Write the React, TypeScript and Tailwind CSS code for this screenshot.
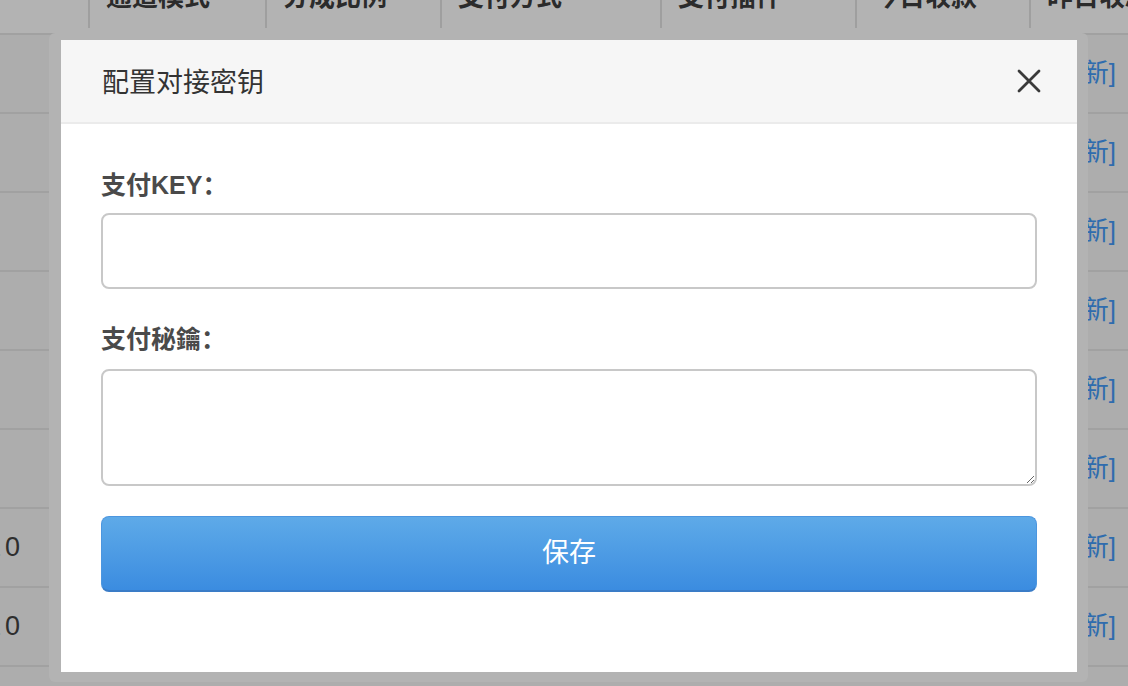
import React from 'react';

const columns = [
  { title: '', width: 'w-[88px]' },
  { title: '通道模式', width: 'w-[177px]' },
  { title: '分成比例', width: 'w-[175px]' },
  { title: '支付方式', width: 'w-[220px]' },
  { title: '支付插件', width: 'w-[195px]' },
  { title: '今日收款', width: 'w-[174px]' },
  { title: '昨日收款', width: 'flex-1' },
];

const rows = [false, false, false, false, false, false, true, true, false];

const CloseIcon = () => (
  <svg width="26" height="26" viewBox="0 0 26 26" fill="none">
    <path d="M3 3 L23 23 M23 3 L3 23" stroke="#3a3a3a" strokeWidth="2.8" strokeLinecap="round" />
  </svg>
);

export default function App() {
  return (
    <div
      className="relative w-[1128px] h-[686px] overflow-hidden bg-[#b3b3b3]"
      style={{ fontFamily: '"Liberation Sans", "Noto Sans CJK SC", sans-serif' }}
    >
      {/* table behind the dialog */}
      <div className="flex flex-col">
        <div className="flex h-[33px]">
          {columns.map((c, i) => (
            <div
              key={i}
              className={`${c.width} h-[28px] ${i > 0 ? 'border-l-2 border-[#9f9f9f]' : ''} pl-[16px] overflow-hidden whitespace-nowrap`}
            >
              <span className="block mt-[-16px] text-[26px] leading-[26px] font-bold text-[#2b2b2b]">{c.title}</span>
            </div>
          ))}
        </div>
        {rows.map((hasValue, i) => (
          <div key={i} className="flex h-[79px] bg-[#adadad] border-t-2 border-[#a1a1a1]">
            <div className="w-[49px] overflow-hidden flex items-center">
              {hasValue && (
                <span className="ml-[-14px] text-[27px] text-[#2e2e2e] whitespace-nowrap">
                  <span className="inline-block">1</span>
                  <span className="inline-block ml-[4px]">0</span>
                </span>
              )}
            </div>
            <div className="flex-1" />
            <div className="w-[120px] flex items-center justify-end pr-[12px]">
              {i < 8 && <span className="text-[26px] text-[#2f6cae]">[更新]</span>}
            </div>
          </div>
        ))}
      </div>

      {/* layer frame */}
      <div className="absolute left-[49px] top-[33px] w-[1039px] h-[649px] rounded-[6px] bg-[#b3b3b3]" />

      {/* dialog */}
      <div className="absolute left-[61px] top-[40px] w-[1016px] h-[632px] bg-white flex flex-col">
        <div className="h-[84px] bg-[#f6f6f6] border-b-2 border-[#ebebeb] flex items-center justify-between pl-[41px] pr-[35px]">
          <span className="text-[27px] text-[#333333] pt-[4px]">配置对接密钥</span>
          <CloseIcon />
        </div>
        <div className="flex flex-col px-[40px] pt-[43px]">
          <label className="text-[25px] leading-[36px] font-bold text-[#4a4a4a] mb-[10px]">支付KEY：</label>
          <input className="h-[76px] w-full border-2 border-[#c8c8c8] rounded-[8px] outline-none px-3 text-[24px]" />
          <label className="text-[25px] leading-[36px] font-bold text-[#4a4a4a] mt-[32px] mb-[12px]">支付秘鑰：</label>
          <textarea className="h-[117px] w-full border-2 border-[#c8c8c8] rounded-[8px] outline-none px-3 py-2 text-[24px] block" />
          <button className="mt-[30px] h-[76px] w-full rounded-[8px] bg-gradient-to-b from-[#5eaae8] to-[#3b8ce0] border border-[#4c96df] border-b-2 border-b-[#3a7cc7] text-white text-[27px]">
            保存
          </button>
        </div>
      </div>
    </div>
  );
}
